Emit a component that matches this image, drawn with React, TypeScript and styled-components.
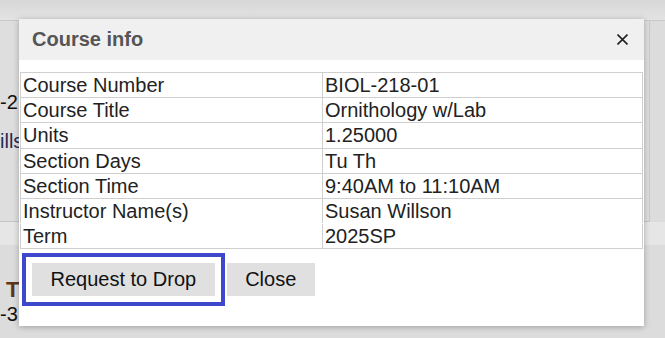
import React from "react";
import styled, { createGlobalStyle } from "styled-components";

const Global = createGlobalStyle`
  html, body { margin: 0; padding: 0; }
  body {
    width: 665px;
    height: 338px;
    overflow: hidden;
    background: #dcdcdc;
    font-family: "Liberation Sans", Arial, sans-serif;
  }
`;

const Page = styled.div`
  position: relative;
  width: 665px;
  height: 338px;
  overflow: hidden;
  background: #dcdcdc;
`;

const TopBar = styled.div`
  height: 20px;
  background: linear-gradient(#d7d7d7, #e3e3e3);
  border-bottom: 1px solid #c9c9c9;
`;

const Card = styled.div`
  width: 650px;
  height: 201px;
  background: #dedede;
  border-right: 1px solid #cacaca;
  border-bottom: 1px solid #c6c6c6;
  display: flex;
  flex-direction: column;
  padding-top: 69px;
  box-sizing: border-box;
  gap: 15px;
`;

const BgLine = styled.div<{ $color?: string; $weight?: number; $size?: number }>`
  font-size: ${(p) => p.$size ?? 20}px;
  line-height: 24px;
  color: ${(p) => p.$color ?? "#111"};
  font-weight: ${(p) => p.$weight ?? 400};
  white-space: nowrap;
`;

const Band = styled.div`
  height: 23px;
  background: #e6e6e6;
`;

const Lower = styled.div`
  display: flex;
  flex-direction: column;
  padding: 33px 0 0 6px;
  gap: 0px;
`;

const LowerSub = styled(BgLine)`
  margin-left: -6px;
`;

const Dialog = styled.div`
  position: absolute;
  left: 19px;
  top: 19px;
  width: 625px;
  background: #fff;
  box-shadow: 0 1px 6px rgba(0, 0, 0, 0.28);
  display: flex;
  flex-direction: column;
`;

const Header = styled.div`
  height: 41px;
  background: #f0f0f0;
  display: flex;
  align-items: center;
  justify-content: space-between;
  padding: 0 16px 0 13px;
`;

const Title = styled.div`
  font-size: 20px;
  line-height: 23px;
  font-weight: 700;
  color: #555;
`;

const CloseX = styled.button`
  border: none;
  background: none;
  padding: 0;
  width: 11px;
  height: 11px;
  display: flex;
  cursor: pointer;
`;

const Body = styled.div`
  padding: 12px 1px 0 1px;
`;

const Table = styled.table`
  width: 623px;
  border-collapse: collapse;
  font-size: 20px;
  color: #222;
`;

const Cell = styled.td<{ $joined?: boolean; $label?: boolean }>`
  border: 1px solid #cfcfcf;
  ${(p) => (p.$joined ? "border-bottom: 1px solid #fff;" : "")}
  padding: 0 2px;
  line-height: 24.2px;
  height: 24.2px;
  width: ${(p) => (p.$label ? "297px" : "auto")};
  white-space: nowrap;
`;

const Footer = styled.div`
  display: flex;
  gap: 12px;
  padding: 14px 13px 30px;
`;

const Button = styled.button<{ $focused?: boolean }>`
  height: 33px;
  padding: 0 18.5px;
  background: #e0e0e0;
  border: none;
  border-radius: 0;
  font-family: "Liberation Sans", Arial, sans-serif;
  font-size: 20px;
  color: #111;
  cursor: pointer;
  ${(p) => (p.$focused ? "outline: 4px solid #3f48cc; outline-offset: 6px;" : "")}
`;

const rows: { label: string; value: string; joined?: boolean }[] = [
  { label: "Course Number", value: "BIOL-218-01" },
  { label: "Course Title", value: "Ornithology w/Lab" },
  { label: "Units", value: "1.25000" },
  { label: "Section Days", value: "Tu Th" },
  { label: "Section Time", value: "9:40AM to 11:10AM" },
  { label: "Instructor Name(s)", value: "Susan Willson", joined: true },
  { label: "Term", value: "2025SP" },
];

export default function App() {
  return (
    <>
      <Global />
      <Page>
        <TopBar />
        <Card>
          <BgLine>-2</BgLine>
          <BgLine $color="#1f2a55">ills</BgLine>
        </Card>
        <Band />
        <Lower>
          <BgLine $color="#5e3515" $weight={700} $size={22}>
            T
          </BgLine>
          <LowerSub>-3</LowerSub>
        </Lower>
        <Dialog role="dialog" aria-label="Course info">
          <Header>
            <Title>Course info</Title>
            <CloseX aria-label="Close">
              <svg width="11" height="11" viewBox="0 0 11 11">
                <path d="M0.5 0.5 L10.5 10.5 M10.5 0.5 L0.5 10.5" stroke="#222" strokeWidth="1.6" />
              </svg>
            </CloseX>
          </Header>
          <Body>
            <Table>
              <tbody>
                {rows.map((r) => (
                  <tr key={r.label}>
                    <Cell $label $joined={r.joined}>
                      {r.label}
                    </Cell>
                    <Cell $joined={r.joined}>{r.value}</Cell>
                  </tr>
                ))}
              </tbody>
            </Table>
          </Body>
          <Footer>
            <Button $focused>Request to Drop</Button>
            <Button>Close</Button>
          </Footer>
        </Dialog>
      </Page>
    </>
  );
}
